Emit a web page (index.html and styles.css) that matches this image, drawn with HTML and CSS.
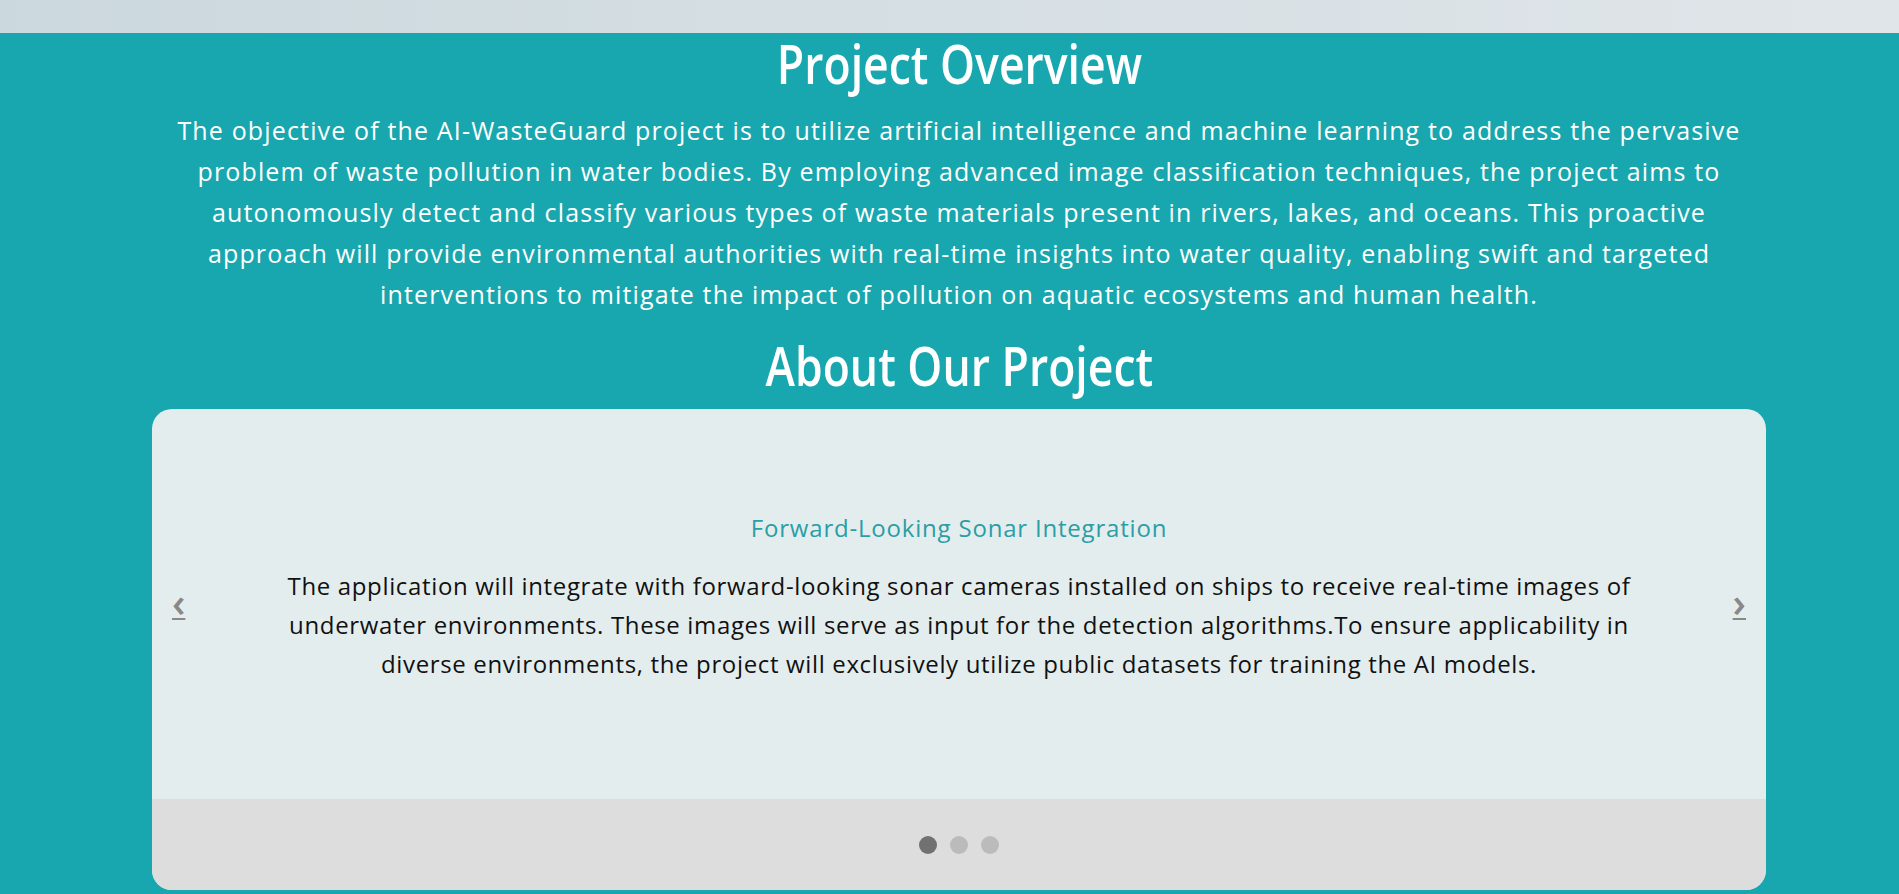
FILE: index.html
```html
<!DOCTYPE html>
<html lang="en">
<head>
<meta charset="utf-8">
<title>AI-WasteGuard</title>
<link rel="stylesheet" href="styles.css">
</head>
<body>
<div class="topbar"></div>
<main class="section">
  <h1 class="heading"><span class="heading-text">Project Overview</span></h1>
  <p class="overview">The objective of the AI-WasteGuard project is to utilize artificial intelligence and machine learning to address the pervasive problem of waste pollution in water bodies. By employing advanced image classification techniques, the project aims to autonomously detect and classify various types of waste materials present in rivers, lakes, and oceans. This proactive approach will provide environmental authorities with real-time insights into water quality, enabling swift and targeted interventions to mitigate the impact of pollution on aquatic ecosystems and human health.</p>
  <h2 class="heading heading-about"><span class="heading-text">About Our Project</span></h2>
  <div class="carousel">
    <div class="slide">
      <a class="control control-prev" href="#">&lsaquo;</a>
      <div class="slide-content">
        <h3 class="slide-title">Forward-Looking Sonar Integration</h3>
        <p class="slide-text">The application will integrate with forward-looking sonar cameras installed on ships to receive real-time images of underwater environments. These images will serve as input for the detection algorithms.To ensure applicability in diverse environments, the project will exclusively utilize public datasets for training the AI models.</p>
      </div>
      <a class="control control-next" href="#">&rsaquo;</a>
    </div>
    <div class="carousel-footer">
      <span class="dot dot-active"></span>
      <span class="dot"></span>
      <span class="dot"></span>
    </div>
  </div>
</main>
</body>
</html>
```

FILE: styles.css
```css
* { box-sizing: border-box; }

html, body {
  margin: 0;
  padding: 0;
  height: 100%;
  background: #18a7ae;
  overflow: hidden;
}

body {
  font-family: "Open Sans", "Lato", sans-serif;
}

.topbar {
  height: 33px;
  background: linear-gradient(90deg, #cbd8dd 0%, #d6dfe4 50%, #e0e5e9 100%);
}

.section {
  background: #18a7ae;
  padding: 2px 133px 0 152px;
  display: flex;
  flex-direction: column;
  align-items: center;
}

.heading {
  margin: 0;
  font-family: "Open Sans", sans-serif;
  font-weight: 600;
  font-size: 55px;
  line-height: 55px;
  color: #ffffff;
  text-align: center;
}

.heading-text {
  display: inline-block;
  transform: scaleX(0.81);
}

.heading-about {
  margin-top: 22px;
}

.overview {
  margin: 20px 0 0;
  max-width: 1590px;
  color: #ffffff;
  font-size: 25px;
  letter-spacing: 1.15px;
  line-height: 41px;
  text-align: center;
}

.carousel {
  margin-top: 17px;
  width: 100%;
  border-radius: 20px;
  overflow: hidden;
  background: #e4eded;
}

.slide {
  position: relative;
  height: 390px;
  display: flex;
  align-items: center;
  justify-content: center;
  padding-bottom: 12px;
}

.slide-content {
  max-width: 1380px;
  text-align: center;
}

.slide-title {
  margin: 0;
  font-weight: 400;
  font-size: 24px;
  letter-spacing: 0.8px;
  line-height: 30px;
  color: #2a9ea6;
}

.slide-text {
  margin: 23px 0 0;
  font-size: 24px;
  letter-spacing: 0.65px;
  line-height: 39px;
  color: #111111;
}

.control {
  position: absolute;
  top: 50%;
  transform: translateY(-50%);
  margin-top: -2px;
  color: #888888;
  font-size: 40px;
  font-weight: 600;
  line-height: 40px;
  text-decoration: underline;
  text-decoration-thickness: 2px;
}

.control-prev { left: 20px; }
.control-next { right: 20px; }

.carousel-footer {
  height: 91px;
  background: #dddddd;
  display: flex;
  align-items: center;
  justify-content: center;
  gap: 13px;
}

.dot {
  width: 18px;
  height: 18px;
  border-radius: 50%;
  background: #bbbbbb;
}

.dot-active {
  background: #717171;
}
```
